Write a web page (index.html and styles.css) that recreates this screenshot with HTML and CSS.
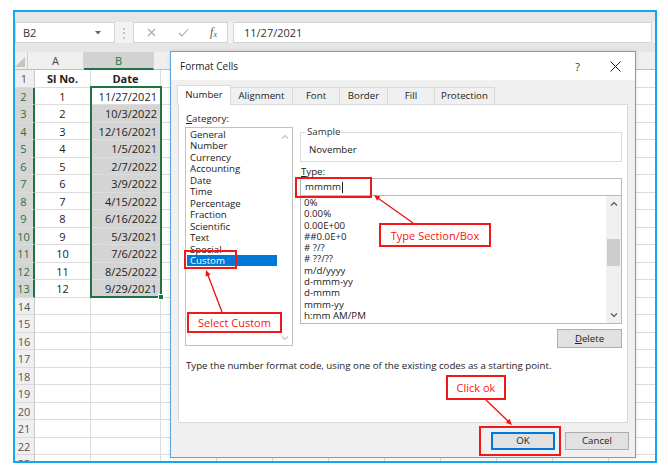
FILE: index.html
```html
<!DOCTYPE html>
<html>
<head>
<meta charset="utf-8">
<link rel="stylesheet" href="styles.css">
</head>
<body>
<div class="screen">
  <div class="frame">
    <div class="topstrip"></div>
    <div class="fbar">
      <div class="namebox"><span>B2</span>
        <svg class="dd" width="6" height="4" viewBox="0 0 6 4"><polygon points="0,0 6,0 3,3.5" fill="#666"/></svg>
      </div>
      <div class="dots">⋮</div>
      <div class="fnbox">
        <svg width="9" height="9" viewBox="0 0 9 9"><path d="M1 1L8 8M8 1L1 8" stroke="#a8a8a8" stroke-width="1.1" fill="none"/></svg>
        <svg width="11" height="9" viewBox="0 0 11 9"><path d="M1 5L4 8L10 1" stroke="#a8a8a8" stroke-width="1.1" fill="none"/></svg>
        <span class="fx">f<sub>x</sub></span>
      </div>
      <div class="finput">11/27/2021</div>
    </div>
    <div class="gapstrip"></div>
    <div class="sheet">
      <div class="row hdr">
        <div class="corner"><svg width="10" height="10" viewBox="0 0 10 10"><polygon points="10,0 10,10 0,10" fill="#c4c4c4"/></svg></div>
        <div class="ch ca">A</div><div class="ch cb on">B</div>
        <div class="ch"></div><div class="ch"></div><div class="ch"></div><div class="ch"></div><div class="ch"></div><div class="ch"></div><div class="ch"></div><div class="ch"></div><div class="ch">K</div>
      </div>
      <div class="row"><div class="rh">1</div><div class="c ca bold">Sl No.</div><div class="c cb bold ctr">Date</div><div class="fill"></div></div>
      <div class="row"><div class="rh on">2</div><div class="c ca">1</div><div class="c cb act">11/27/2021</div><div class="fill"></div></div>
      <div class="row"><div class="rh on">3</div><div class="c ca">2</div><div class="c cb sel">10/3/2022</div><div class="fill"></div></div>
      <div class="row"><div class="rh on">4</div><div class="c ca">3</div><div class="c cb sel">12/16/2021</div><div class="fill"></div></div>
      <div class="row"><div class="rh on">5</div><div class="c ca">4</div><div class="c cb sel">1/5/2021</div><div class="fill"></div></div>
      <div class="row"><div class="rh on">6</div><div class="c ca">5</div><div class="c cb sel">2/7/2022</div><div class="fill"></div></div>
      <div class="row"><div class="rh on">7</div><div class="c ca">6</div><div class="c cb sel">3/9/2022</div><div class="fill"></div></div>
      <div class="row"><div class="rh on">8</div><div class="c ca">7</div><div class="c cb sel">4/15/2022</div><div class="fill"></div></div>
      <div class="row"><div class="rh on">9</div><div class="c ca">8</div><div class="c cb sel">6/16/2022</div><div class="fill"></div></div>
      <div class="row"><div class="rh on">10</div><div class="c ca">9</div><div class="c cb sel">5/3/2021</div><div class="fill"></div></div>
      <div class="row"><div class="rh on">11</div><div class="c ca">10</div><div class="c cb sel">7/6/2022</div><div class="fill"></div></div>
      <div class="row"><div class="rh on">12</div><div class="c ca">11</div><div class="c cb sel">8/25/2022</div><div class="fill"></div></div>
      <div class="row"><div class="rh on">13</div><div class="c ca">12</div><div class="c cb sel">9/29/2021</div><div class="fill"></div></div>
      <div class="row"><div class="rh">14</div><div class="c ca"></div><div class="c cb"></div><div class="fill"></div></div>
      <div class="row"><div class="rh">15</div><div class="c ca"></div><div class="c cb"></div><div class="fill"></div></div>
      <div class="row"><div class="rh">16</div><div class="c ca"></div><div class="c cb"></div><div class="fill"></div></div>
      <div class="row"><div class="rh">17</div><div class="c ca"></div><div class="c cb"></div><div class="fill"></div></div>
      <div class="row"><div class="rh">18</div><div class="c ca"></div><div class="c cb"></div><div class="fill"></div></div>
      <div class="row"><div class="rh">19</div><div class="c ca"></div><div class="c cb"></div><div class="fill"></div></div>
      <div class="row"><div class="rh">20</div><div class="c ca"></div><div class="c cb"></div><div class="fill"></div></div>
      <div class="row"><div class="rh">21</div><div class="c ca"></div><div class="c cb"></div><div class="fill"></div></div>
      <div class="row"><div class="rh">22</div><div class="c ca"></div><div class="c cb"></div><div class="fill"></div></div>
      <div class="row"><div class="rh">23</div><div class="c ca"></div><div class="c cb"></div><div class="fill"></div></div>
      <div class="selbox"><i class="handle"></i></div>
    </div>
  </div>

  <div class="dialog">
    <div class="titlebar">
      <span class="title">Format Cells</span>
      <span class="help">?</span>
      <svg class="close" width="11" height="11" viewBox="0 0 11 11"><path d="M0.5 0.5L10.5 10.5M10.5 0.5L0.5 10.5" stroke="#222" stroke-width="1" fill="none"/></svg>
    </div>
    <div class="tabs">
      <div class="tab active t1">Number</div>
      <div class="tab t2">Alignment</div>
      <div class="tab t3">Font</div>
      <div class="tab t4">Border</div>
      <div class="tab t5">Fill</div>
      <div class="tab t6">Protection</div>
    </div>
    <div class="panel">
      <div class="cols">
        <div class="leftcol">
          <div class="lbl"><u>C</u>ategory:</div>
          <div class="catlist">
            <div class="items">
              <div class="it">General</div>
              <div class="it">Number</div>
              <div class="it">Currency</div>
              <div class="it">Accounting</div>
              <div class="it">Date</div>
              <div class="it">Time</div>
              <div class="it">Percentage</div>
              <div class="it">Fraction</div>
              <div class="it">Scientific</div>
              <div class="it">Text</div>
              <div class="it">Special</div>
              <div class="it selit">Custom</div>
            </div>
            <div class="vscroll light">
              <svg width="8" height="5" viewBox="0 0 8 5"><path d="M1 4.5L4 1.5L7 4.5" stroke="#c4c4c4" stroke-width="1.2" fill="none"/></svg>
              <svg width="8" height="5" viewBox="0 0 8 5"><path d="M1 0.5L4 3.5L7 0.5" stroke="#c4c4c4" stroke-width="1.2" fill="none"/></svg>
            </div>
          </div>
        </div>
        <div class="rightcol">
          <fieldset class="sample">
            <legend>Sample</legend>
            <div class="sval">November</div>
          </fieldset>
          <div class="lbl tlbl"><u>T</u>ype:</div>
          <div class="typein">mmmm<span class="caret"></span></div>
          <div class="fmtlist">
            <div class="items">
              <div class="it">0%</div>
              <div class="it">0.00%</div>
              <div class="it">0.00E+00</div>
              <div class="it">##0.0E+0</div>
              <div class="it"># ?/?</div>
              <div class="it"># ??/??</div>
              <div class="it">m/d/yyyy</div>
              <div class="it">d-mmm-yy</div>
              <div class="it">d-mmm</div>
              <div class="it">mmm-yy</div>
              <div class="it">h:mm AM/PM</div>
            </div>
            <div class="vscroll">
              <svg width="8" height="5" viewBox="0 0 8 5"><path d="M1 4.5L4 1.5L7 4.5" stroke="#555" stroke-width="1.2" fill="none"/></svg>
              <div class="thumb"></div>
              <svg width="8" height="5" viewBox="0 0 8 5"><path d="M1 0.5L4 3.5L7 0.5" stroke="#555" stroke-width="1.2" fill="none"/></svg>
            </div>
          </div>
          <div class="btn delete"><u>D</u>elete</div>
        </div>
      </div>
      <div class="desc">Type the number format code, using one of the existing codes as a starting point.</div>
    </div>
    <div class="footer">
      <div class="btn ok">OK</div>
      <div class="btn">Cancel</div>
    </div>
  </div>

  <div class="mark m-type"></div>
  <div class="mark m-custom"></div>
  <div class="mark m-ok"></div>
  <div class="note n-type">Type Section/Box</div>
  <div class="note n-custom">Select Custom</div>
  <div class="note n-ok">Click ok</div>
  <svg class="arrows" width="668" height="476" viewBox="0 0 668 476">
    <g stroke="#f01010" stroke-width="1.3" fill="none">
      <line x1="222" y1="312" x2="207.5" y2="274"/>
      <line x1="413" y1="223" x2="377" y2="197.5"/>
      <line x1="486" y1="400" x2="509" y2="422"/>
    </g>
    <g fill="#f01010">
      <polygon points="206,270 210.6,274.7 205.6,276.6"/>
      <polygon points="374,195 380.4,196.5 377.2,200.8"/>
      <polygon points="512,425 509.6,418.8 505.8,422.8"/>
    </g>
  </svg>
</div>
</body>
</html>
```

FILE: styles.css
```css
* { box-sizing: border-box; }
body { margin: 0; background: #fff; font-family: "Open Sans", "Noto Sans", sans-serif; }

.screen { position: relative; width: 668px; height: 476px; overflow: hidden; padding: 10px 0 0 13px; }

/* Excel window */
.frame { width: 644px; height: 453px; border: 2px solid #13a8ee; display: flex; flex-direction: column; background: #ececec; }
.topstrip { height: 10px; background: #e6e6e6; }
.fbar { height: 21px; display: flex; background: #f3f3f3; }
.namebox { width: 100px; background: #fff; border: 1px solid #d4d4d4; display: flex; align-items: center; justify-content: space-between; padding: 0 13px 0 7px; font-size: 11px; color: #333; }
.dots { width: 18px; text-align: center; color: #b0b0b0; font-size: 12px; line-height: 21px; }
.fnbox { width: 95px; margin-right: 5px; background: #fff; border: 1px solid #d4d4d4; display: flex; align-items: center; justify-content: space-between; padding: 0 10px 0 13px; }
.fx { font-family: "Liberation Serif", serif; font-style: italic; font-size: 12px; color: #555; line-height: 1; }
.fx sub { font-size: 8px; vertical-align: -1px; }
.finput { flex: 1; margin-right: 3px; background: #fff; border: 1px solid #d4d4d4; font-size: 11px; color: #333; line-height: 19px; padding-left: 10px; }
.gapstrip { height: 9px; background: #e6e6e6; }

.sheet { flex: 1; position: relative; overflow: hidden; background: #fff; font-size: 11px; color: #222; }
.row { display: flex; height: 17.5px; }
.row.hdr { height: 18px; }
.corner { width: 20px; background: #efefef; border-right: 1px solid #cfcfcf; border-bottom: 1px solid #bdbdbd; display: flex; align-items: flex-end; justify-content: flex-end; padding: 0 2px 2px 0; }
.ch { width: 56px; flex: none; background: #efefef; border-right: 1px solid #d2d2d2; border-bottom: 1px solid #bdbdbd; text-align: center; line-height: 17px; color: #444; }
.ch.cb { width: 70px; }
.ch.on { background: #d2d2d2; color: #217346; border-bottom: 2px solid #217346; }
.rh { width: 20px; flex: none; background: #efefef; border-right: 1px solid #c8c8c8; border-bottom: 1px solid #dadada; color: #555; text-align: center; padding-right: 1px; line-height: 17px; font-size: 11px; }
.rh.on { background: #d5d5d5; color: #217346; border-right: 2px solid #217346; }
.c { flex: none; border-right: 1px solid #dcdcdc; border-bottom: 1px solid #dcdcdc; line-height: 17px; white-space: nowrap; overflow: hidden; }
.c.ca { width: 56px; text-align: center; }
.c.cb { width: 70px; text-align: right; padding-right: 3px; }
.c.cb.ctr { text-align: center; padding-right: 0; }
.c.bold { font-weight: 700; }
.c.sel { background: #d4d4d4; }
.fill { flex: 1; border-bottom: 1px solid #dcdcdc; background: repeating-linear-gradient(to right, transparent 0 55px, #dcdcdc 55px 56px); }
.selbox { position: absolute; left: 75px; top: 34px; width: 72px; height: 212px; border: 2px solid #217346; }
.handle { position: absolute; right: -4px; bottom: -4px; width: 6px; height: 6px; background: #217346; border: 1px solid #fff; }

/* Dialog */
.dialog { position: absolute; left: 170px; top: 51px; width: 466px; height: 407px; border: 1px solid #5aa6e2; background: #f0f0f0; display: flex; flex-direction: column; font-size: 9.7px; color: #1a1a1a; box-shadow: 0 0 4px rgba(0,0,0,0.12); }
.titlebar { height: 28px; background: #fff; display: flex; align-items: center; padding: 0 0 0 9px; }
.title { font-size: 10px; color: #222; flex: 1; }
.help { font-size: 11px; color: #333; margin-right: 30px; }
.close { margin-right: 14px; }
.tabs { display: flex; align-items: flex-end; height: 19px; margin-top: 5px; padding-left: 6px; position: relative; z-index: 1; }
.tab { height: 17px; border: 1px solid #d9d9d9; border-bottom: none; margin-left: -1px; background: #f0f0f0; line-height: 16px; text-align: center; color: #222; }
.tab.active { height: 20px; margin-bottom: -1px; background: #fff; line-height: 18px; margin-left: 0; z-index: 2; }
.t1 { width: 54px; } .t2 { width: 63px; } .t3 { width: 48px; } .t4 { width: 49px; } .t5 { width: 48px; } .t6 { width: 61px; }
.panel { height: 319px; margin: 0 7px; background: #fff; border: 1px solid #d9d9d9; padding: 8px 5px 0 6px; }
.cols { display: flex; gap: 7px; }
.leftcol { width: 108px; }
.lbl { height: 14px; line-height: 11px; padding-left: 1px; color: #222; }
.catlist { height: 219px; border: 1px solid #c2c2c2; display: flex; }
.items { flex: 1; padding-top: 1px; }
.catlist .it { line-height: 11.45px; padding-left: 3px; margin: 0 1px 0 1px; white-space: nowrap; }
.catlist .selit { background: #0078d7; color: #fff; }
.vscroll { width: 15px; background: #f0f0f0; display: flex; flex-direction: column; align-items: center; padding: 5px 0 5px; }
.vscroll.light { background: #fff; width: 14px; justify-content: space-between; padding: 6px 0 4px; }
.vscroll svg:last-child { margin-top: auto; }
.thumb { width: 13px; height: 27px; background: #cdcdcd; margin-top: 33px; }
.rightcol { width: 322px; padding-top: 14px; display: flex; flex-direction: column; }
.sample { margin: 0; padding: 0 8px; border: 1px solid #dcdcdc; min-width: 0; }
.sample legend { padding: 0 1px; margin-left: -3px; line-height: 10px; color: #333; }
.sval { line-height: 12px; padding: 7px 0 5px; }
.tlbl { margin-top: 4px; height: 11px; line-height: 11px; }
.typein { margin-top: 1px; height: 18px; border: 1px solid #b9b9b9; line-height: 16px; padding-left: 4px; display: flex; align-items: center; }
.caret { display: inline-block; width: 1px; height: 11px; background: #222; margin-left: 1px; }
.fmtlist { height: 128px; border: 1px solid #b9b9b9; border-top: none; display: flex; }
.fmtlist .items { padding-top: 1px; }
.fmtlist .it { line-height: 11.3px; padding-left: 3px; white-space: nowrap; }
.btn { height: 18px; width: 64px; background: #e1e1e1; border: 1px solid #adadad; text-align: center; line-height: 16px; color: #222; font-size: 9.7px; }
.delete { align-self: flex-end; margin-top: 5px; width: 65px; height: 19px; line-height: 17px; }
.desc { margin-top: 12px; line-height: 12px; padding-left: 1px; color: #222; white-space: nowrap; }
.footer { display: flex; justify-content: flex-end; gap: 10px; padding: 9px 6px 0 0; }
.btn.ok { border: 2px solid #0078d7; line-height: 14px; }

/* Annotations */
.mark { position: absolute; border: 2px solid #f01818; }
.m-type { left: 295px; top: 177px; width: 77px; height: 21px; }
.m-custom { left: 184px; top: 250px; width: 53px; height: 19px; }
.m-ok { left: 479px; top: 426px; width: 82px; height: 30px; }
.note { position: absolute; background: #fff; border: 2px solid #f01818; color: #ff1010; font-size: 11px; display: flex; align-items: center; justify-content: center; white-space: nowrap; }
.n-type { left: 379px; top: 223px; width: 112px; height: 24px; }
.n-custom { left: 187px; top: 312px; width: 95px; height: 21px; }
.n-ok { left: 446px; top: 375px; width: 60px; height: 25px; }
.arrows { position: absolute; left: 0; top: 0; pointer-events: none; }
```
